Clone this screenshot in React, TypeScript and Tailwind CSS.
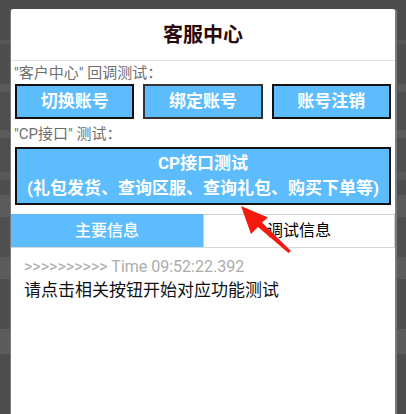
import React from "react";

const stripes: [number, string][] = [
  [40, "#4c4c4c"],
  [4, "#575757"],
  [40, "#4e4e4e"],
  [8, "#5a5a5a"],
  [38, "#4f4f4f"],
  [8, "#5a5a5a"],
  [34, "#4f4f4f"],
  [8, "#585858"],
  [15, "#4e4e4e"],
  [22, "#5b5b5b"],
  [40, "#4f4f4f"],
  [22, "#5c5c5c"],
  [50, "#4e4e4e"],
  [25, "#5c5c5c"],
  [60, "#4d4d4d"],
];

export default function App() {
  const cjk = { fontFamily: 'Roboto, "Noto Sans CJK SC", "Noto Sans", sans-serif' };
  return (
    <div className="relative w-[406px] h-[414px] overflow-hidden bg-[#4e4e4e]" style={cjk}>
      <div className="flex flex-col">
        {stripes.map(([h, c], i) => (
          <div key={i} style={{ height: h, background: c }} />
        ))}
      </div>
      <div className="absolute left-[10px] top-[9px] w-[387px] h-[410px] bg-[#7a7a7a] rounded-t-[3px]" />
      <div className="absolute left-[11px] top-[9px] w-[384px] h-[410px] bg-white rounded-t-[2px] flex flex-col">
        <div className="h-[52px] flex items-center justify-center border-b border-[#e2e2e2] text-[20px] font-bold text-[#2b0a0a]">
          客服中心
        </div>
        <div className="px-[3px] pt-[1px] h-[23px] text-[15px] leading-[22px] text-[#6f6f6f]">"客户中心" 回调测试：</div>
        <div className="flex gap-[9px] px-[4px]">
          {["切换账号", "绑定账号", "账号注销"].map((t, i) => (
            <div
              key={t}
              className={`flex-1 h-[35px] flex items-center justify-center bg-[#5cbcfd] border-2 ${i === 1 ? "border-[#333]" : "border-[#111]"} text-white font-bold text-[17px]`}
            >
              {t}
            </div>
          ))}
        </div>
        <div className="px-[3px] mt-[4px] h-[24px] text-[15px] leading-[22px] text-[#6f6f6f]">"CP接口" 测试：</div>
        <div className="mx-[4px] h-[58px] bg-[#5cbcfd] border-2 border-[#111] flex flex-col items-center justify-center text-white font-bold text-[17px] leading-[25px]">
          <div>CP接口测试</div>
          <div>(礼包发货、查询区服、查询礼包、购买下单等)</div>
        </div>
        <div className="mt-[9px] flex h-[34px] border-b border-[#d6d6d6]">
          <div className="w-[192px] bg-[#5cbcfd] flex items-center justify-center text-white text-[16px] font-medium">主要信息</div>
          <div className="flex-1 border-l border-t border-r border-[#cfcfcf] flex items-center justify-center text-[16px] text-black">调试信息</div>
        </div>
        <div className="px-[13px] pt-[8px]">
          <div className="text-[16px] leading-[22px] text-[#acacac]">
            &gt;&gt;&gt;&gt;&gt;&gt;&gt;&gt;&gt;&gt; Time 09:52:22.392
          </div>
          <div className="text-[17px] leading-[24px] text-[#111]">请点击相关按钮开始对应功能测试</div>
        </div>
      </div>
      <svg className="absolute left-0 top-0" width="406" height="414" viewBox="0 0 406 414">
        <polygon
          points="241,206 268,217.5 262,222.5 291,251 288.5,253 258,227 251,234"
          fill="#f3190f"
        />
      </svg>
    </div>
  );
}
